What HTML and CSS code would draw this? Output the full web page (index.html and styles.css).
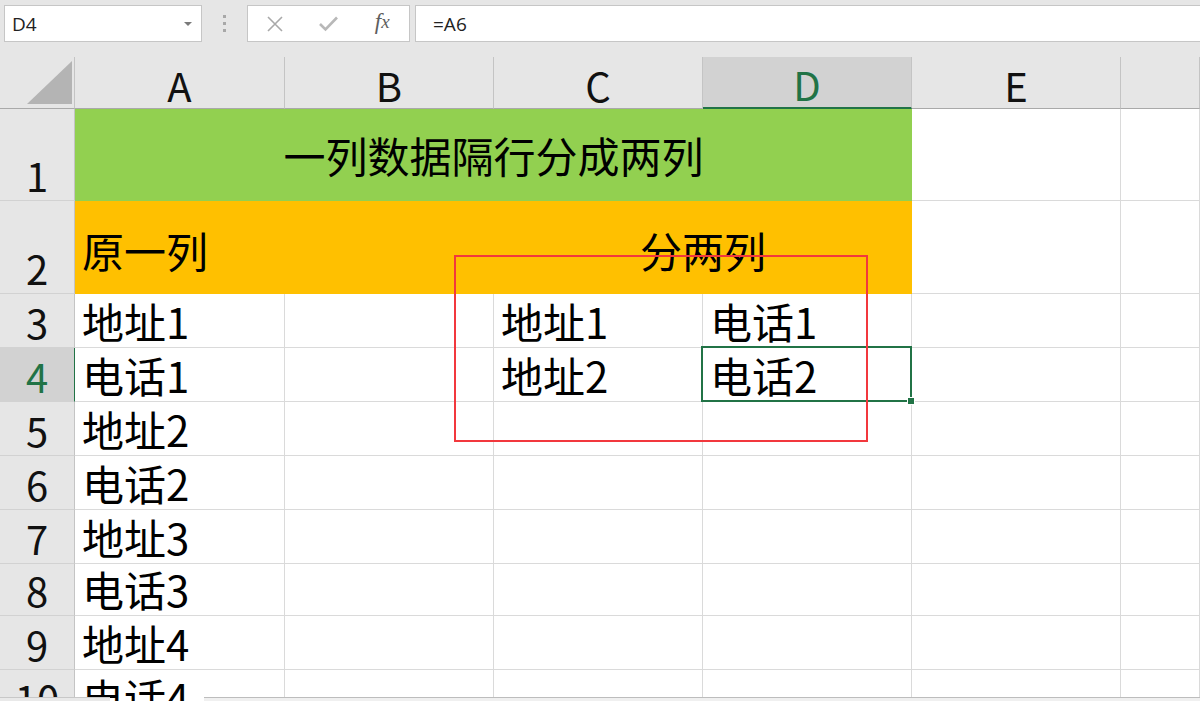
FILE: index.html
```html
<!DOCTYPE html>
<html lang="zh-CN">
<head>
<meta charset="utf-8">
<title>一列数据隔行分成两列</title>
<link rel="stylesheet" href="styles.css">
</head>
<body>
<div class="app">
  <div class="fbar">
    <div class="namebox"><span class="ref">D4</span><span class="caret"></span></div>
    <div class="grip"><i></i><i></i><i></i></div>
    <div class="fxbox">
      <span class="fbtn"><svg width="18" height="18" viewBox="0 0 18 18"><path d="M2 2 L16 16 M16 2 L2 16" stroke="#a9a9a9" stroke-width="1.6" fill="none"/></svg></span>
      <span class="fbtn"><svg width="21" height="17" viewBox="0 0 21 17"><path d="M2 9 L7.5 14.5 L19 2.5" stroke="#b8b8b8" stroke-width="2.6" fill="none"/></svg></span>
      <span class="fbtn fx">f<span class="fx-x">x</span></span>
    </div>
    <div class="finput">=A6</div>
  </div>
  <div class="sheet">
    <div class="grid">
      <div class="corner"><svg width="74" height="51" viewBox="0 0 74 51"><polygon points="27,47 72,47 72,4" fill="#b4b4b4"/></svg></div>
      <div class="ch">A</div>
      <div class="ch">B</div>
      <div class="ch">C</div>
      <div class="ch sel">D</div>
      <div class="ch">E</div>
      <div class="ch"></div>

      <div class="rh">1</div>
      <div class="title">一列数据隔行分成两列</div>
      <div class="c"></div>
      <div class="c"></div>

      <div class="rh">2</div>
      <div class="band left">原一列</div>
      <div class="band mid">分两列</div>
      <div class="c"></div>
      <div class="c"></div>

      <div class="rh">3</div>
      <div class="c">地址1</div><div class="c"></div><div class="c">地址1</div><div class="c">电话1</div><div class="c"></div><div class="c"></div>

      <div class="rh sel">4</div>
      <div class="c">电话1</div><div class="c"></div><div class="c">地址2</div><div class="c active">电话2</div><div class="c"></div><div class="c"></div>

      <div class="rh">5</div>
      <div class="c">地址2</div><div class="c"></div><div class="c"></div><div class="c"></div><div class="c"></div><div class="c"></div>

      <div class="rh">6</div>
      <div class="c">电话2</div><div class="c"></div><div class="c"></div><div class="c"></div><div class="c"></div><div class="c"></div>

      <div class="rh">7</div>
      <div class="c">地址3</div><div class="c"></div><div class="c"></div><div class="c"></div><div class="c"></div><div class="c"></div>

      <div class="rh">8</div>
      <div class="c">电话3</div><div class="c"></div><div class="c"></div><div class="c"></div><div class="c"></div><div class="c"></div>

      <div class="rh">9</div>
      <div class="c">地址4</div><div class="c"></div><div class="c"></div><div class="c"></div><div class="c"></div><div class="c"></div>

      <div class="rh">10</div>
      <div class="c">电话4</div><div class="c"></div><div class="c"></div><div class="c"></div><div class="c"></div><div class="c"></div>
    </div>
    <div class="redbox"></div>
  </div>
  <div class="hscroll"><span class="tabs"></span><span class="gap"></span><span class="bar"></span></div>
</div>
</body>
</html>
```

FILE: styles.css
```css
html, body {
  margin: 0;
  padding: 0;
  background: #ffffff;
  overflow: hidden;
}

.app {
  width: 1200px;
  height: 701px;
  position: relative;
  overflow: hidden;
  font-family: "Noto Sans CJK SC", "Noto Sans", sans-serif;
  color: #000;
}

/* formula bar */
.fbar {
  height: 57px;
  box-sizing: border-box;
  background: #e6e6e6;
  display: flex;
  align-items: flex-start;
  padding: 5px 0 0 4px;
}

.namebox {
  width: 198px;
  height: 37px;
  box-sizing: border-box;
  border: 1px solid #c6c6c6;
  background: #ffffff;
  display: flex;
  align-items: center;
  justify-content: space-between;
  padding: 0 9px 0 7px;
  font-family: "Open Sans", "Noto Sans", sans-serif;
  font-size: 19px;
  color: #222;
}

.caret {
  width: 0;
  height: 0;
  border-left: 4px solid transparent;
  border-right: 4px solid transparent;
  border-top: 4px solid #7a7a7a;
  margin-top: 1px;
}

.grip {
  width: 45px;
  display: flex;
  flex-direction: column;
  align-items: center;
  gap: 4px;
  padding-top: 10px;
}

.grip i {
  display: block;
  width: 3px;
  height: 3px;
  background: #a8a8a8;
}

.fxbox {
  width: 163px;
  height: 37px;
  box-sizing: border-box;
  border: 1px solid #c6c6c6;
  background: #ffffff;
  display: flex;
}

.fbtn {
  flex: 1;
  display: flex;
  align-items: center;
  justify-content: center;
}

.fbtn svg {
  display: block;
}

.fx {
  font-family: "Liberation Serif", serif;
  font-style: italic;
  font-size: 23px;
  color: #5e5e5e;
  padding-bottom: 3px;
}

.fx-x {
  font-size: 19px;
}

.finput {
  flex: 1;
  margin-left: 5px;
  height: 37px;
  box-sizing: border-box;
  border: 1px solid #c6c6c6;
  border-right: none;
  background: #ffffff;
  display: flex;
  align-items: center;
  padding-left: 17px;
  font-family: "Open Sans", "Noto Sans", sans-serif;
  font-size: 19px;
  color: #222;
}

/* sheet */
.sheet {
  position: relative;
}

.grid {
  display: grid;
  grid-template-columns: 75px 210px 209px 209px 209px 209px 79px;
  grid-template-rows: 52px 92px 93px 54px 54px 54px 54px 54px 52px 54px 54px;
}

.corner {
  background: #e6e6e6;
  border-right: 1px solid #c4c4c4;
  border-bottom: 1px solid #a9a9a9;
  box-sizing: border-box;
}

.corner svg {
  display: block;
}

.ch {
  background: #e6e6e6;
  border-right: 1px solid #c4c4c4;
  border-bottom: 1px solid #a9a9a9;
  box-sizing: border-box;
  display: flex;
  align-items: center;
  justify-content: center;
  padding-top: 4px;
  font-size: 40px;
  line-height: 40px;
  color: #111;
}

.ch.sel {
  background: #d2d2d2;
  color: #217346;
  border-bottom: 2px solid #217346;
}

.rh {
  background: #e6e6e6;
  border-right: 1px solid #c4c4c4;
  border-bottom: 1px solid #d2d2d2;
  box-sizing: border-box;
  display: flex;
  align-items: flex-end;
  justify-content: center;
  padding-bottom: 5px;
  font-size: 40px;
  line-height: 40px;
  color: #111;
}

.rh.sel {
  background: #d2d2d2;
  color: #217346;
  border-right-color: #217346;
}

.c {
  border-right: 1px solid #dadada;
  border-bottom: 1px solid #dadada;
  box-sizing: border-box;
  display: flex;
  align-items: flex-end;
  padding: 0 0 5px 7px;
  font-size: 42px;
  line-height: 42px;
  white-space: nowrap;
  color: #000;
}

.c.active {
  position: relative;
}

.c.active::before {
  content: "";
  position: absolute;
  left: -2px;
  top: -2px;
  right: -1px;
  bottom: -1px;
  border: 2px solid #217346;
}

.c.active::after {
  content: "";
  position: absolute;
  right: -4px;
  bottom: -4px;
  width: 6px;
  height: 6px;
  background: #217346;
  border: 1px solid #ffffff;
}

.title {
  grid-column: span 4;
  background: #92d050;
  display: flex;
  align-items: center;
  justify-content: center;
  font-size: 42px;
  line-height: 42px;
  white-space: nowrap;
}

.band {
  grid-column: span 2;
  background: #ffc000;
  display: flex;
  align-items: center;
  font-size: 42px;
  line-height: 42px;
  white-space: nowrap;
  padding-top: 4px;
}

.band.left {
  padding-left: 7px;
}

.band.mid {
  justify-content: center;
}

.redbox {
  position: absolute;
  left: 454px;
  top: 198px;
  width: 414px;
  height: 187px;
  box-sizing: border-box;
  border: 2px solid #f2383d;
  pointer-events: none;
}

.hscroll {
  position: absolute;
  left: 0;
  right: 0;
  top: 697px;
  height: 4px;
  display: flex;
}

.hscroll .tabs {
  width: 110px;
  background: #e9e9e9;
  border-top: 1px solid #c8c8c8;
}

.hscroll .gap {
  width: 94px;
}

.hscroll .bar {
  flex: 1;
  background: #f0f0f0;
  border-top: 1px solid #bdbdbd;
}
```
